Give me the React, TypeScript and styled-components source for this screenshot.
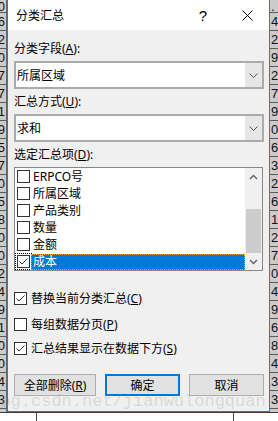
import React from "react";
import styled, { createGlobalStyle } from "styled-components";

const GlobalStyle = createGlobalStyle`
  html, body {
    margin: 0;
    padding: 0;
    background: #ffffff;
  }
  body {
    font-family: "Noto Sans", "Noto Sans CJK SC", sans-serif;
    color: #000;
  }
`;

const Screen = styled.div`
  position: relative;
  width: 278px;
  height: 421px;
  overflow: hidden;
  display: flex;
  flex-direction: column;
`;

const Desk = styled.div`
  display: flex;
  height: 412px;
  flex-shrink: 0;
`;

// spreadsheet cells peeking out on both sides of the dialog
const Strip = styled.div<{ $w: number; $side: "left" | "right" }>`
  width: ${(p) => p.$w}px;
  flex-shrink: 0;
  background: #cbcbcb;
  overflow: hidden;
  display: flex;
  flex-direction: column;
  ${(p) => (p.$side === "left" ? "border-right: 1px solid #666;" : "")}
  box-sizing: border-box;
`;

const Cell = styled.div<{ $side: "left" | "right"; $first?: boolean }>`
  height: ${(p) => (p.$first ? 13 : 18)}px;
  flex-shrink: 0;
  box-sizing: border-box;
  border-bottom: 1px solid #5a5a5a;
  display: flex;
  align-items: center;
  justify-content: ${(p) => (p.$side === "left" ? "flex-end" : "flex-start")};
  padding: 0 1px;
  font-family: "Liberation Sans", Arial, sans-serif;
  font-size: 13px;
  color: #111;
  white-space: nowrap;
`;

const Dialog = styled.div`
  width: 263px;
  flex-shrink: 0;
  box-sizing: border-box;
  border: 1px solid #2b7cd3;
  border-top: none;
  background: #f0f0f0;
  display: flex;
  flex-direction: column;
`;

const TitleBar = styled.div`
  height: 30px;
  flex-shrink: 0;
  background: #ffffff;
  display: flex;
  align-items: center;
  padding-left: 8px;
  font-size: 12px;
`;

const Title = styled.div`
  flex: 1;
`;

const TitleButton = styled.div`
  width: 44px;
  height: 30px;
  display: flex;
  align-items: center;
  justify-content: center;
  font-family: "Liberation Sans", Arial, sans-serif;
  font-size: 15px;
`;

const Body = styled.div`
  flex: 1;
  display: flex;
  flex-direction: column;
  padding: 0 5px 0 6px;
`;

const Label = styled.div<{ $top: number }>`
  height: 16px;
  line-height: 16px;
  font-size: 12px;
  margin-top: ${(p) => p.$top}px;
  white-space: nowrap;
`;

const Combo = styled.div`
  margin-top: 4px;
  height: 28px;
  box-sizing: border-box;
  border: 2px solid #ababab;
  background: #ffffff;
  display: flex;
`;

const ComboText = styled.div`
  flex: 1;
  padding-left: 1px;
  display: flex;
  align-items: center;
  font-size: 12px;
`;

const DropButton = styled.div`
  width: 17px;
  background: #e6e6e6;
  display: flex;
  align-items: center;
  justify-content: center;
`;

const ListBox = styled.div`
  margin-top: 4px;
  width: 249px;
  height: 104px;
  box-sizing: border-box;
  border: 1px solid #828790;
  background: #ffffff;
  display: flex;
`;

const Items = styled.div`
  flex: 1;
  display: flex;
  flex-direction: column;
`;

const Item = styled.div`
  height: 17px;
  display: flex;
  align-items: center;
  padding-left: 2px;
`;

const Box = styled.div<{ $focus?: boolean }>`
  width: 13px;
  height: 13px;
  flex-shrink: 0;
  box-sizing: border-box;
  border: 1px solid #333333;
  background: #ffffff;
  display: flex;
  align-items: center;
  justify-content: center;
  ${(p) => (p.$focus ? "outline: 1px dotted #000; outline-offset: 1px;" : "")}
`;

const ItemText = styled.div<{ $selected?: boolean }>`
  flex: 1;
  align-self: flex-end;
  height: 16px;
  line-height: 16px;
  margin-left: 1px;
  padding-left: 2px;
  font-size: 12px;
  box-sizing: border-box;
  ${(p) =>
    p.$selected
      ? "background: #0078d7; color: #fff; outline: 1px dotted #f4a03c; outline-offset: -1px;"
      : ""}
`;

const ScrollBar = styled.div`
  width: 17px;
  background: #f0f0f0;
  display: flex;
  flex-direction: column;
`;

const ScrollArrow = styled.div`
  height: 17px;
  display: flex;
  align-items: center;
  justify-content: center;
`;

const Track = styled.div`
  flex: 1;
  display: flex;
  flex-direction: column;
`;

const Thumb = styled.div`
  margin: 24px 1px 0 1px;
  height: 44px;
  background: #cdcdcd;
`;

const Option = styled.div<{ $top: number }>`
  margin-top: ${(p) => p.$top}px;
  height: 16px;
  display: flex;
  align-items: center;
  gap: 4px;
  font-size: 12px;
  white-space: nowrap;
`;

const ButtonRow = styled.div`
  margin-top: 18px;
  display: flex;
  gap: 9px;
`;

const Button = styled.div<{ $w: number; $default?: boolean }>`
  width: ${(p) => p.$w}px;
  height: 22px;
  box-sizing: border-box;
  background: #e1e1e1;
  border: ${(p) => (p.$default ? "2px solid #0078d7" : "1px solid #adadad")};
  display: flex;
  align-items: center;
  justify-content: center;
  font-size: 12px;
`;

const BottomRow = styled.div`
  flex: 1;
  display: flex;
  background: #ffffff;
  border-top: 1px solid #3a3a3a;
`;

const BottomCell = styled.div<{ $w: number }>`
  width: ${(p) => p.$w}px;
  flex-shrink: 0;
  border-right: 1px solid #444;
  box-sizing: border-box;
`;

const Watermark = styled.div`
  position: absolute;
  left: -20px;
  top: 392px;
  font-family: "Liberation Mono", "DejaVu Sans Mono", monospace;
  font-size: 17px;
  color: rgba(140, 140, 140, 0.25);
  white-space: nowrap;
  pointer-events: none;
`;

const Chevron: React.FC<{ up?: boolean }> = ({ up }) => (
  <svg width="9" height="6" viewBox="0 0 9 6">
    <path
      d={up ? "M1 5 L4.5 1.5 L8 5" : "M1 1 L4.5 4.5 L8 1"}
      fill="none"
      stroke="#606060"
      strokeWidth="1.4"
    />
  </svg>
);

const ComboChevron = () => (
  <svg width="9" height="5" viewBox="0 0 9 5">
    <path d="M0.5 0.5 L4.5 4.5 L8.5 0.5" fill="none" stroke="#555" strokeWidth="1" />
  </svg>
);

const Check = () => (
  <svg width="11" height="11" viewBox="0 0 11 11">
    <path d="M1.5 5.5 L4 8 L9.5 2.5" fill="none" stroke="#333" strokeWidth="1" />
  </svg>
);

const CloseIcon = () => (
  <svg width="11" height="11" viewBox="0 0 11 11">
    <path d="M0.5 0.5 L10.5 10.5 M10.5 0.5 L0.5 10.5" stroke="#000" strokeWidth="1" />
  </svg>
);

const leftCells = ["00", "6", "2", "20", "7", "47", "41", "9", "5", "7", "10", "5", "8", "40", "00", "52", "4", "9", "51", "50", "00", "4", "3"];
const rightCells = [".", "4", "2", "9", "2", "7", "9", "0", "6", "3", "2", "6", "1", "2", "7", "0", "4", "9", "6", "8", "4", "3", "3"];

const fields = [
  { name: "ERPCO号", checked: false },
  { name: "所属区域", checked: false },
  { name: "产品类别", checked: false },
  { name: "数量", checked: false },
  { name: "金额", checked: false },
  { name: "成本", checked: true, selected: true },
];

export default function App() {
  return (
    <Screen>
      <GlobalStyle />
      <Desk>
        <Strip $w={7} $side="left">
          {leftCells.map((c, i) => (
            <Cell key={i} $side="left" $first={i === 0}>
              {c}
            </Cell>
          ))}
        </Strip>
        <Dialog>
          <TitleBar>
            <Title>分类汇总</Title>
            <TitleButton>?</TitleButton>
            <TitleButton>
              <CloseIcon />
            </TitleButton>
          </TitleBar>
          <Body>
            <Label $top={11}>
              分类字段(<u>A</u>):
            </Label>
            <Combo>
              <ComboText>所属区域</ComboText>
              <DropButton>
                <ComboChevron />
              </DropButton>
            </Combo>
            <Label $top={5}>
              汇总方式(<u>U</u>):
            </Label>
            <Combo>
              <ComboText>求和</ComboText>
              <DropButton>
                <ComboChevron />
              </DropButton>
            </Combo>
            <Label $top={5}>
              选定汇总项(<u>D</u>):
            </Label>
            <ListBox>
              <Items>
                {fields.map((f) => (
                  <Item key={f.name}>
                    <Box $focus={f.selected}>{f.checked && <Check />}</Box>
                    <ItemText $selected={f.selected}>{f.name}</ItemText>
                  </Item>
                ))}
              </Items>
              <ScrollBar>
                <ScrollArrow>
                  <Chevron up />
                </ScrollArrow>
                <Track>
                  <Thumb />
                </Track>
                <ScrollArrow>
                  <Chevron />
                </ScrollArrow>
              </ScrollBar>
            </ListBox>
            <Option $top={19}>
              <Box>
                <Check />
              </Box>
              <span>
                替换当前分类汇总(<u>C</u>)
              </span>
            </Option>
            <Option $top={10}>
              <Box />
              <span>
                每组数据分页(<u>P</u>)
              </span>
            </Option>
            <Option $top={8}>
              <Box>
                <Check />
              </Box>
              <span>
                汇总结果显示在数据下方(<u>S</u>)
              </span>
            </Option>
            <ButtonRow>
              <Button $w={82}>
                <span>
                  全部删除(<u>R</u>)
                </span>
              </Button>
              <Button $w={75} $default>
                确定
              </Button>
              <Button $w={75}>取消</Button>
            </ButtonRow>
          </Body>
        </Dialog>
        <Strip $w={8} $side="right">
          {rightCells.map((c, i) => (
            <Cell key={i} $side="right" $first={i === 0}>
              {c}
            </Cell>
          ))}
        </Strip>
      </Desk>
      <BottomRow>
        <BottomCell $w={37} />
        <BottomCell $w={197} />
      </BottomRow>
      <Watermark>blog.csdn.net/jianwulongquan</Watermark>
    </Screen>
  );
}
